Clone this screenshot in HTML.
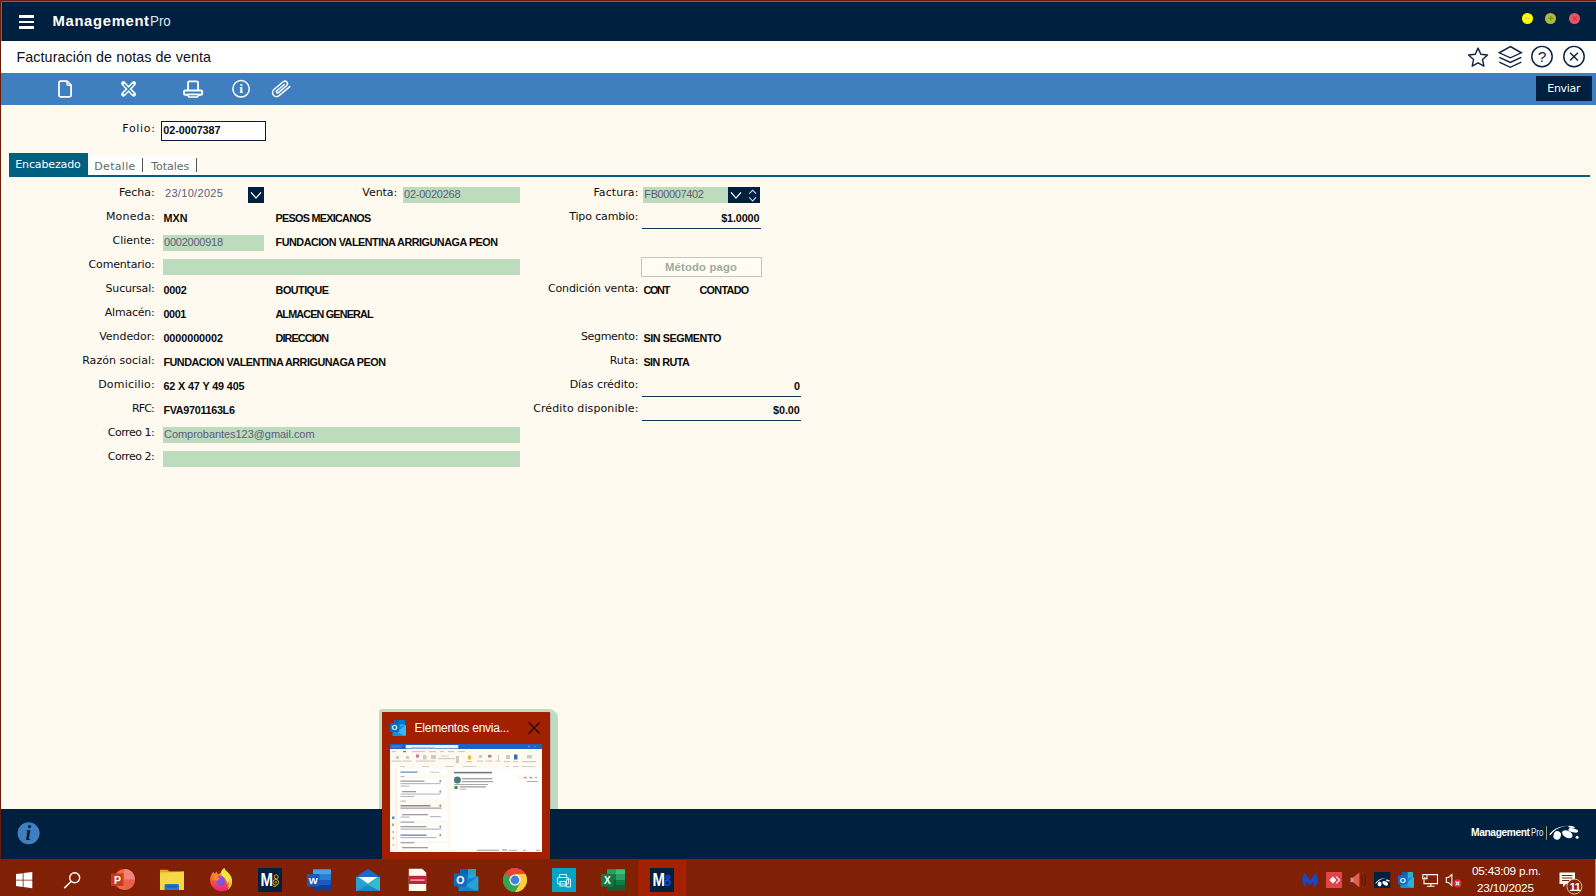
<!DOCTYPE html>
<html lang="es"><head><meta charset="utf-8"><title>Facturación de notas de venta</title>
<style>
html,body{margin:0;padding:0;background:#fffaf0;}
body{width:1596px;height:896px;position:relative;overflow:hidden;font-family:'Liberation Sans',sans-serif;}
.r{position:absolute;}
.t{position:absolute;white-space:pre;}
svg{position:absolute;overflow:visible;}
</style></head><body>
<div class="r" style="left:0px;top:0px;width:1596px;height:896px;background:#fffaf0;"></div>
<div class="r" style="left:0px;top:0px;width:1596px;height:1px;background:#6a1c08;"></div>
<div class="r" style="left:1px;top:1px;width:1595px;height:1px;background:#5a6a9a;"></div>
<div class="r" style="left:1px;top:2px;width:1595px;height:39px;background:#00203f;"></div>
<div class="r" style="left:1px;top:1px;width:1px;height:40px;background:#5a6a9a;"></div>
<div class="r" style="left:1px;top:41px;width:1595px;height:32px;background:#fff;"></div>
<div class="r" style="left:1px;top:73px;width:1595px;height:32px;background:#3f7fbf;"></div>
<div class="r" style="left:0px;top:0px;width:1px;height:859px;background:#6a1c08;"></div>
<div class="r" style="left:18.8px;top:15.1px;width:15.3px;height:2.9px;background:#fff;border-radius:.5px;"></div>
<div class="r" style="left:18.8px;top:20.5px;width:15.3px;height:2.9px;background:#fff;border-radius:.5px;"></div>
<div class="r" style="left:18.8px;top:25.9px;width:15.3px;height:2.9px;background:#fff;border-radius:.5px;"></div>
<div class="r" style="left:1522.0px;top:12.799999999999999px;width:11.2px;height:11.2px;border-radius:50%;background:#ffff00;"></div>
<div class="r" style="left:1545.2px;top:12.799999999999999px;width:11.2px;height:11.2px;border-radius:50%;background:#b4b840;"></div>
<div class="r" style="left:1569.3000000000002px;top:12.799999999999999px;width:11.2px;height:11.2px;border-radius:50%;background:#e0586c;"></div>
<div class="r" style="left:1536px;top:76px;width:56px;height:25px;background:#00203f;"></div>
<div class="r" style="left:161px;top:121px;width:105px;height:20px;background:#fff;box-sizing:border-box;border:1px solid #0a1a3a;"></div>
<div class="r" style="left:9px;top:175px;width:1581px;height:2px;background:#006080;"></div>
<div class="r" style="left:9px;top:153px;width:79px;height:24px;background:#006080;"></div>
<div class="r" style="left:88px;top:156px;width:109px;height:19px;background:#fff;"></div>
<div class="r" style="left:142px;top:158px;width:1px;height:14px;background:#555;"></div>
<div class="r" style="left:196px;top:158px;width:1px;height:14px;background:#555;"></div>
<div class="r" style="left:403px;top:187px;width:117px;height:16px;background:#bddbbd;"></div>
<div class="r" style="left:163px;top:235px;width:101px;height:16px;background:#bddbbd;"></div>
<div class="r" style="left:163px;top:259px;width:357px;height:16px;background:#bddbbd;"></div>
<div class="r" style="left:163px;top:427px;width:357px;height:16px;background:#bddbbd;"></div>
<div class="r" style="left:163px;top:451px;width:357px;height:16px;background:#bddbbd;"></div>
<div class="r" style="left:643px;top:187px;width:85px;height:16px;background:#bddbbd;"></div>
<div class="r" style="left:728px;top:187px;width:32px;height:16px;background:#00203f;"></div>
<div class="r" style="left:248px;top:187px;width:16px;height:16px;background:#00203f;"></div>
<div class="r" style="left:642px;top:228px;width:119px;height:1px;background:#1a3050;"></div>
<div class="r" style="left:642px;top:396px;width:159px;height:1px;background:#1a3050;"></div>
<div class="r" style="left:642px;top:420px;width:159px;height:1px;background:#1a3050;"></div>
<div class="r" style="left:641px;top:257px;width:121px;height:20px;background:#fffcf4;box-sizing:border-box;border:1px solid #c4c4c4;"></div>
<div class="r" style="left:1px;top:809px;width:1595px;height:50px;background:#00203f;"></div>
<div class="r" style="left:0px;top:859px;width:1596px;height:37px;background:#802004;"></div>
<!-- window control glyphs -->
<svg style="left:0;top:0" width="1596" height="110" viewBox="0 0 1596 110">
  <g fill="none" stroke-linecap="butt">
    <path d="M1525.1 18.4h5" stroke="#d6c45a" stroke-width="1.1"/>
    <path d="M1548.1 18.4h5.4M1550.8 15.7v5.4" stroke="#58a018" stroke-width="1.1"/>
    <path d="M1572.9 16.4l4 4M1576.9 16.4l-4 4" stroke="#ee2a2a" stroke-width="1.1"/>
  </g>
  <!-- title bar icons -->
  <g fill="none" stroke="#0c2340" stroke-width="1.45" stroke-linejoin="miter">
    <path d="M1478.05 48.10L1480.81 54.30L1487.56 55.01L1482.52 59.55L1483.93 66.19L1478.05 62.80L1472.17 66.19L1473.58 59.55L1468.54 55.01L1475.29 54.30Z" stroke-linejoin="round" stroke-width="1.4"/>
    <path d="M1510.3 46.5l11 6.3-11 5-11-5z"/>
    <path d="M1499.3 57.3l11 5.1 11-5.1M1499.3 62.2l11 5.1 11-5.1"/>
    <circle cx="1542" cy="56.6" r="10.2"/>
    <circle cx="1574" cy="56.6" r="10.2"/>
    <path d="M1570.1 52.7l7.8 7.8M1577.9 52.7l-7.8 7.8"/>
      </g>
  <text x="1542.100" y="62.300" text-anchor="middle" font-family="'Liberation Sans',sans-serif" font-size="15.500" fill="#0c2340">?</text>
  <!-- toolbar icons -->
  <g fill="none" stroke="#fff" stroke-linejoin="round" stroke-linecap="round">
    <path d="M60.600 81.100h6.400l4.100 4.100v10c0 .9-.7 1.600-1.600 1.600h-8.900c-.9 0-1.600-.7-1.600-1.600v-12.500c0-.9.700-1.600 1.600-1.600z" stroke-width="1.75"/>
    <path d="M66.900 81.400v2.800c0 .6.500 1.100 1.100 1.100h2.900" stroke-width="1.300"/>
    <path d="M123.400 83.500l10.400 10.900M133.800 83.500l-10.400 10.900" stroke-width="4.5"/>
    <path d="M124.300 84.500l8.600 8.900M132.900 84.500l-8.600 8.900" stroke="#2a8ab0" stroke-width="1.5"/>
    <!-- printer -->
    <path d="M188.100 90v-7.500c0-.7.500-1.200 1.200-1.200h7.600c.7 0 1.200.5 1.200 1.200v7.500" stroke-width="1.800"/>
    <path d="M185.300 90.500h15.600c.7 0 1.300.6 1.300 1.300v1.700c0 .7-.6 1.300-1.300 1.300h-15.600c-.7 0-1.300-.6-1.300-1.300v-1.700c0-.7.600-1.300 1.300-1.300z" stroke-width="1.900"/>
    <path d="M187.200 94.600l1.600 2.400h8.600l1.600-2.400z" stroke-width="1.500" fill="#3f7fbf"/>
    <!-- info -->
    <circle cx="241.050" cy="88.800" r="8.200" stroke-width="1.500"/>
    <!-- paperclip -->
    <g transform="translate(280.900 88.900) rotate(-40)" stroke-width="1.500">
      <path d="M8.300 4H-5.700A4 4 0 0 1 -5.700 -4H6.300A2.600 2.600 0 0 1 6.300 1.200H-4.300A1.100 1.100 0 0 1 -4.300 -1.200H5.400"/>
    </g>
  </g>
  <text x="241.100" y="93.200" text-anchor="middle" font-family="'Liberation Serif',serif" font-weight="bold" font-size="13.500" fill="#fffdf0">i</text>
</svg>
<!-- form chevrons -->
<svg style="left:0;top:180px" width="800" height="30" viewBox="0 180 800 30">
  <g fill="none" stroke="#fff" stroke-width="1.35" stroke-linecap="butt" stroke-linejoin="miter">
    <path d="M251 192.400l5 5.700 5-5.700"/>
    <path d="M731 192.400l5 5.700 5-5.700"/>
    <path d="M749.300 193.700l3.350-3.500 3.350 3.500M749.300 197.300l3.350 3.700 3.350-3.700" stroke-width="1.050" stroke="#e4e0f0"/>
  </g>
</svg>
<!-- footer info + logo -->
<svg style="left:0;top:809px" width="1596" height="50" viewBox="0 809 1596 50">
  <circle cx="28.600" cy="833.300" r="11" fill="#3f7fbf"/>
  <text x="28.300" y="840.200" text-anchor="middle" font-family="'Liberation Serif',serif" font-style="italic" font-weight="bold" font-size="20" fill="#00203f">i</text>
  <rect x="1546" y="826.200" width="1" height="13.600" fill="#9aa07a"/>
  <g fill="#fff">
    <path d="M1549.300 834.600c3.500-5.600 11-9.300 19.500-8.900c-7.500.5-13.600 3.300-17.400 8.300c-.8 1-1.700 1.400-2.100.6z"/>
    <ellipse cx="1557.200" cy="835.400" rx="3.700" ry="4.300" transform="rotate(15 1557.200 835.400)"/>
    <ellipse cx="1567.300" cy="834.200" rx="5.600" ry="3.500" transform="rotate(28 1567.300 834.200)"/>
    <ellipse cx="1573.300" cy="830.400" rx="5" ry="1.900" transform="rotate(14 1573.300 830.400)"/>
    <ellipse cx="1571.500" cy="826.900" rx="3.400" ry="1" transform="rotate(12 1571.500 826.900)"/>
    <circle cx="1577.100" cy="837.300" r="1.500"/>
  </g>
</svg>
<!-- taskbar preview popup -->
<div class="r" style="left:379px;top:709px;width:178.500px;height:100px;background:#c0dcc0;border-radius:3px 9px 0 0;"></div>
<div class="r" style="left:382px;top:712px;width:168px;height:147px;background:#a02000;"></div>
<div class="r" style="left:550px;top:713px;width:1px;height:96px;background:#b4b4b4;"></div>
<svg style="left:382px;top:712px" width="168" height="147" viewBox="382 712 168 147">
  <!-- outlook icon -->
  <g>
    <rect x="394.500" y="720" width="10.500" height="9" fill="#28a8ea"/>
    <rect x="394.500" y="720" width="5.250" height="4.500" fill="#0364b8"/><rect x="399.750" y="720" width="5.250" height="4.500" fill="#0078d4"/>
    <rect x="394.500" y="724.500" width="5.250" height="4.500" fill="#0f78d4"/><rect x="399.750" y="724.500" width="5.250" height="4.500" fill="#28a8ea"/>
    <path d="M392.500 728.500l13.500-3.500v9.500c0 .8-.6 1.500-1.500 1.500h-12z" fill="#1490df"/>
    <path d="M406 725l-9 7 7.500 4c.9 0 1.500-.7 1.500-1.500z" fill="#50d9ff" opacity=".55"/>
    <rect x="390" y="723" width="9" height="9" rx=".8" fill="#0f6cbd"/>
    <text x="394.500" y="730.200" text-anchor="middle" font-family="'Liberation Sans',sans-serif" font-weight="bold" font-size="7.500" fill="#fff">O</text>
  </g>
  <path d="M528.600 722.300l11 11.300M539.600 722.300l-11 11.300" stroke="#000" stroke-width="1.050" fill="none"/>
  <!-- thumbnail -->
  <rect x="390" y="744" width="152" height="108" fill="#fff"/>
  <rect x="390" y="744" width="152" height="5" fill="#2060c4"/>
  <rect x="405.700" y="745" width="52.600" height="3.400" fill="#e8f0fc"/>
  <rect x="411" y="747" width="24" height="1.400" fill="#a8c8f0"/>
  <rect x="390" y="749" width="152" height="19.500" fill="#fffaf0"/>
  <rect x="390" y="768.500" width="6" height="83.500" fill="#fffaf0"/>
  <rect x="396" y="768.500" width="1" height="83.500" fill="#f4efe2"/>
  <rect x="447" y="768.500" width="3.500" height="83.500" fill="#fffaf0"/>
  <rect x="390" y="849" width="152" height="3" fill="#fffaf0"/>
  <g fill="#fffaf0">
    <rect x="397" y="775" width="49.500" height="3"/><rect x="397" y="799" width="49.500" height="12.500"/><rect x="397" y="820.500" width="49.500" height="3"/><rect x="397" y="841" width="49.500" height="3"/>
  </g>
  <!-- ribbon marks -->
  <g fill="#ccccc6">
    <rect x="392" y="751" width="4" height="1.200"/><rect x="403" y="751" width="3" height="1.200" fill="#5080c0"/><rect x="412" y="751" width="13" height="1.200"/><rect x="429" y="751" width="7" height="1.200"/><rect x="440" y="751" width="4" height="1.200"/><rect x="448" y="751" width="6" height="1.200"/><rect x="458" y="751" width="7" height="1.200"/>
    <rect x="391.500" y="760.500" width="10" height="1.200"/><rect x="402.500" y="760.500" width="9" height="1.200"/><rect x="416" y="760.500" width="19" height="1.200"/><rect x="438" y="758" width="17" height="1.200"/><rect x="441" y="755.500" width="8" height="1"/><rect x="466" y="761" width="6" height="1.200"/><rect x="477" y="760.500" width="6" height="1.200"/><rect x="485.500" y="760.500" width="7" height="1.200"/><rect x="495.500" y="760.500" width="5" height="1.200"/><rect x="504" y="761" width="6" height="1.200"/><rect x="513" y="761" width="5" height="1.200"/><rect x="522" y="761" width="14" height="1.200"/>
    <rect x="396" y="756" width="3" height="3"/><rect x="406" y="756" width="3" height="3"/><rect x="423" y="755" width="3.500" height="4.500"/><rect x="431" y="755" width="5" height="4"/><rect x="456" y="756" width="3" height="7"/><rect x="479" y="755" width="3" height="3"/><rect x="498" y="755" width="1" height="5"/><rect x="506" y="755" width="4" height="4"/><rect x="527" y="755" width="5" height="3.500"/>
    <rect x="416" y="754.500" width="3" height="3" fill="#d070a0"/><rect x="468" y="755.500" width="3" height="4" fill="#e8b830"/><rect x="488" y="755" width="3.500" height="2.500" fill="#d868b0"/><rect x="514" y="754.500" width="3.500" height="5" fill="#3070c0"/>
    <rect x="400" y="766" width="5" height="1" fill="#d0d0c8"/><rect x="422" y="766" width="7" height="1" fill="#d0d0c8"/><rect x="445" y="766" width="9" height="1" fill="#d0d0c8"/><rect x="463" y="766" width="13" height="1" fill="#d0d0c8"/><rect x="506" y="766" width="3" height="1" fill="#d0d0c8"/><rect x="513" y="766" width="6" height="1" fill="#d0d0c8"/><rect x="522" y="766" width="13" height="1" fill="#d0d0c8"/>
  </g>
  <!-- list -->
  <g fill="#bcbcc0">
    <rect x="400.500" y="771.500" width="17" height="1.300" fill="#6a90d0"/><rect x="430.500" y="771.800" width="9" height="1" fill="#c8c8c8"/>
    <rect x="400.500" y="776" width="4" height="1.200"/>
    <rect x="400.500" y="780.500" width="24" height="1.300" fill="#9c9ca4"/><rect x="400.500" y="783" width="40" height="1.200"/><rect x="400.500" y="785.500" width="9" height="1.100" fill="#b8b8b8"/><rect x="439.500" y="780" width="1.600" height="2.200" fill="#909090"/>
    <rect x="402" y="791" width="14" height="1.300" fill="#9c9ca4"/><rect x="400.500" y="793.500" width="40" height="1.200"/><rect x="400.500" y="796" width="14" height="1.100" fill="#b8b8b8"/><rect x="439.500" y="790.500" width="1.600" height="2.200" fill="#909090"/>
    <rect x="400.500" y="800.500" width="5.500" height="1.200"/>
    <rect x="400.500" y="805" width="30" height="1.500" fill="#8a8a94"/><rect x="400.500" y="807.500" width="41" height="1.300" fill="#a4a4aa"/><rect x="439.500" y="804.500" width="1.600" height="2.500" fill="#909090"/>
    <rect x="402" y="814" width="26" height="1.300" fill="#9c9ca4"/><rect x="400.500" y="816.500" width="9" height="1.200"/><rect x="430" y="816" width="11" height="1.200"/>
    <rect x="400.500" y="821.500" width="14" height="1.300" fill="#a8a8ae"/>
    <rect x="400.500" y="826" width="26" height="1.300" fill="#9c9ca4"/><rect x="400.500" y="828.500" width="41" height="1.300"/><rect x="439.500" y="825.500" width="1.600" height="2.200" fill="#909090"/>
    <rect x="400.500" y="834.500" width="26" height="1.300" fill="#7080b0"/><rect x="400.500" y="837" width="36" height="1.200"/><rect x="439.500" y="834" width="1.600" height="2.200" fill="#909090"/>
    <rect x="400.500" y="842" width="14" height="1.300" fill="#a8a8ae"/>
    <rect x="402" y="847" width="26" height="1.300" fill="#9c9ca4"/>
    <rect x="392" y="816.500" width="2.500" height="2.500" fill="#5088d0"/><rect x="392" y="823.500" width="2" height="2.500" fill="#a0b0a8"/><rect x="392.500" y="831" width="1.500" height="2" fill="#b0b8b0"/><rect x="392.500" y="837" width="1.500" height="2.500" fill="#a8c0b0"/><rect x="392.500" y="844.500" width="2" height="1" fill="#b0b0b0"/>
  </g>
  <!-- reading pane -->
  <g>
    <rect x="454" y="771.800" width="38" height="1.600" fill="#787880"/>
    <circle cx="457.400" cy="780" r="3.500" fill="#4f7a78"/>
    <rect x="462" y="778" width="30" height="1.400" fill="#a4a4aa"/><rect x="462" y="781" width="31" height="1.200" fill="#a0a0a8"/>
    <rect x="454" y="784" width="34" height=".9" fill="#a0a0a0"/>
    <circle cx="456" cy="787.500" r="1.800" fill="#2f9a3a"/>
    <rect x="460" y="786.200" width="26" height="1.300" fill="#a0a0a0"/><rect x="460" y="788.600" width="6" height="1.100" fill="#b8b8b8"/>
    <rect x="518" y="775.500" width="20.500" height="4" fill="#fdf8ee"/>
    <rect x="524" y="777" width="2.500" height="1.200" fill="#e060b0"/><rect x="530" y="777" width="2" height="1.200" fill="#5090e0"/><rect x="535" y="777" width="2" height="1.200" fill="#b0b0b0"/>
    <rect x="527" y="781" width="11" height="1.100" fill="#b0b0b4"/>
    <rect x="477" y="849.700" width="22" height="1.100" fill="#a8a8a8"/><rect x="502" y="849" width="5" height="2" fill="#c8c8c0"/><rect x="509" y="849.800" width="8" height="1" fill="#b0b0b0"/><rect x="523" y="849.800" width="3" height="1" fill="#b0b0b0"/><rect x="536" y="849.500" width="4" height="1.500" fill="#ccccc6"/>
    <rect x="528" y="745.800" width="2" height="1.500" fill="#6090e0"/><rect x="534" y="746.200" width="2" height="1" fill="#6090e0"/><rect x="391.500" y="745.500" width="10" height="2" fill="#4880dc"/>
  </g>
</svg>
<!-- taskbar -->
<div class="r" style="left:638px;top:860px;width:48px;height:36px;background:#a42100;"></div>
<div class="r" style="left:1595px;top:859px;width:1px;height:37px;background:#a89088;"></div>
<svg style="left:0;top:859px" width="1596" height="37" viewBox="0 859 1596 37">
  <!-- start -->
  <g fill="#fff">
    <path d="M16 874.100l6.700-.9v6.500h-6.700zM23.500 873.100l8.800-1.200v7.800h-8.800zM16 880.500h6.700v6.500l-6.700-.9zM23.500 880.500h8.800v7.800l-8.800-1.200z"/>
  </g>
  <!-- search -->
  <circle cx="74.700" cy="877.700" r="5" fill="none" stroke="#fff" stroke-width="1.400"/>
  <path d="M71.300 881.300l-7 6.800" stroke="#fff" stroke-width="1.500" fill="none"/>
  <!-- powerpoint -->
  <g>
    <circle cx="124.500" cy="879.500" r="10.500" fill="#ed6c47"/>
    <path d="M124.500 869a10.500 10.500 0 0 1 10.500 10.500h-10.500z" fill="#ff8f6b" opacity=".9"/>
    <path d="M124.500 869a10.500 10.500 0 0 1 10.500 10.500h-10.500z" fill="#e8868a" opacity=".7"/>
    <path d="M135 879.500a10.500 10.500 0 0 1-10.500 10.500v-10.500z" fill="#e8614a"/>
    <rect x="111" y="873.500" width="12.500" height="12.500" rx=".8" fill="#c43e1c"/>
    <text x="117.400" y="883.700" text-anchor="middle" font-family="'Liberation Sans',sans-serif" font-weight="bold" font-size="10.500" fill="#fff">P</text>
  </g>
  <!-- folder -->
  <g>
    <path d="M160 869.800h7.500l2 2h-9.500z" fill="#e8a820"/>
    <rect x="160" y="871.500" width="24" height="18.500" fill="#f0c838"/>
    <path d="M160 890v-16l24-2.500v18.500z" fill="#f4d848"/>
    <path d="M164.500 890v-4.500c0-1 .6-1.500 1.500-1.500h11.500c.9 0 1.500.5 1.500 1.500v4.500z" fill="#2878d0"/>
    <rect x="166.500" y="885.500" width="10.500" height="2" fill="#1a5cb0"/>
  </g>
  <!-- firefox -->
  <defs>
    <linearGradient id="ffb" x1="0" y1="0" x2="0" y2="1"><stop offset="0" stop-color="#ff9a28"/><stop offset=".55" stop-color="#f0503c"/><stop offset="1" stop-color="#e61e8c"/></linearGradient>
    <linearGradient id="ffg" x1="0" y1="0" x2="1" y2="1"><stop offset="0" stop-color="#c048d8"/><stop offset="1" stop-color="#5a56e0"/></linearGradient>
  </defs>
  <g>
    <path d="M211.500 874.500c.8-1.500 1.600-2.300 2.300-2.800c0 1 .4 1.600.9 2.100c.6-1.100 1.400-1.900 2.300-2.300c-.2 1.200.1 2 .9 2.700c2-1.300 5-1.600 7.500-.6c4.500 1.900 6.800 6.500 5.800 11c-1.200 4.800-6 7.500-11.200 6.600c-5.600-1-9.500-5.500-9.900-10.300c-.2-2.400.3-4.600 1.400-6.400z" fill="url(#ffb)"/>
    <path d="M224.300 867.700c.4 1.700 1.600 2.900 3.200 4.300c2.900 2.500 4.900 5.700 4.600 9.900c-.3 3.600-2 6.300-4.600 8c2-2.800 2.300-5.600 1.300-8.300c-.3 1.300-.9 2.100-1.800 2.600c.3-3.400-1.500-5.600-3.500-7.100c-1.800-1.300-2.900-2.800-2.600-5.200c.8-1.300 1.900-2.900 3.400-4.200z" fill="#f2e63c"/>
    <path d="M229 879c.5 3.500-.5 6.500-3 8.800c3-.8 5.200-3.500 5.800-6.500z" fill="#f8b838" opacity=".8"/>
    <ellipse cx="220.300" cy="880.700" rx="4.600" ry="5" fill="url(#ffg)"/>
    <path d="M213.500 876.800c1.200-1.200 3.300-1.800 5.300-1.200c-1.100.3-1.800 1-1.900 1.900c1.300-.1 2.500.2 3.100 1.200c-1.700.5-2.600 1.900-4.300 1.900c-1.500 0-2.500-1.700-2.200-3.800z" fill="#ff8a20"/>
  </g>
  <!-- MB navy icons -->
  <g>
    <rect x="258" y="868" width="24" height="24" fill="#00203f"/>
    <text x="260.600" y="885.900" font-family="'Liberation Sans',sans-serif" font-weight="bold" font-size="18" fill="#fff" textLength="12.500" lengthAdjust="spacingAndGlyphs">M</text>
    <g fill="none" stroke="#e0a818" stroke-width="1"><circle cx="276.200" cy="876.800" r="2"/><circle cx="275.800" cy="882.300" r="2.900"/><circle cx="275.800" cy="882.300" r="1" stroke-width=".8"/><path d="M272.800 886c1.300.7 2.600.6 3.800-.1"/></g>
    <rect x="650" y="868" width="24" height="24" fill="#00203f"/>
    <text x="652.600" y="885.900" font-family="'Liberation Sans',sans-serif" font-weight="bold" font-size="18" fill="#fff" textLength="12.500" lengthAdjust="spacingAndGlyphs">M</text>
    <g fill="none" stroke="#0a50e0" stroke-width="1.600"><circle cx="667.800" cy="877.200" r="1.700"/><circle cx="667.400" cy="882.700" r="2.500"/></g>
  </g>
  <!-- word -->
  <g>
    <rect x="313" y="869.300" width="18" height="5.400" fill="#41a5ee"/><rect x="313" y="874.700" width="18" height="5.300" fill="#2b7cd3"/><rect x="313" y="880" width="18" height="5.300" fill="#185abd"/><rect x="313" y="885.300" width="18" height="5.200" fill="#103f91"/>
    <rect x="307" y="874" width="12.500" height="12.500" rx=".8" fill="#185abd"/>
    <text x="313.250" y="883.700" text-anchor="middle" font-family="'Liberation Sans',sans-serif" font-weight="bold" font-size="9.500" fill="#fff">W</text>
  </g>
  <!-- mail -->
  <g>
    <path d="M356 877l12-8.300 12 8.300z" fill="#1a6ac8"/>
    <rect x="356" y="877" width="24" height="14" fill="#30b0d8"/>
    <path d="M358.500 877h19l-9.500 6.500z" fill="#fffaf0"/>
    <path d="M356 877l12 8 12-8v14h-24z" fill="#28a0d0"/>
    <path d="M368 885l12-8v14z" fill="#38c8d0" opacity=".7"/>
    <path d="M356 891l12-6 12 6z" fill="#1888c0"/>
  </g>
  <!-- pdf -->
  <g>
    <path d="M408.800 868.700h13.400l4 4v18.300h-17.400z" fill="#fffaf0"/>
    <rect x="408.800" y="875.800" width="17.400" height="8.200" fill="#c8203c"/>
    <rect x="410.300" y="879.300" width="14.400" height="1.600" fill="#f0a0b0"/>
  </g>
  <!-- outlook -->
  <g>
    <rect x="460.500" y="869" width="15.500" height="13" fill="#28a8ea"/>
    <rect x="460.500" y="869" width="7.800" height="6.500" fill="#0364b8"/><rect x="468.300" y="869" width="7.700" height="6.500" fill="#2aa0c8"/>
    <rect x="460.500" y="875.500" width="7.800" height="6.500" fill="#0f78d4"/><rect x="468.300" y="875.500" width="7.700" height="6.500" fill="#28a8ea"/>
    <path d="M458.500 881.500l19.800-5.500v13.500c0 .9-.7 1.600-1.600 1.600h-18.200z" fill="#1580cc"/>
    <path d="M478.300 876l-13 10 11.400 5.100c.9 0 1.600-.7 1.600-1.600z" fill="#35b8d8" opacity=".6"/>
    <rect x="453.800" y="873.500" width="13" height="13" rx="1" fill="#0f6cbd"/>
    <text x="460.300" y="883.800" text-anchor="middle" font-family="'Liberation Sans',sans-serif" font-weight="bold" font-size="10.500" fill="#fff">O</text>
  </g>
  <!-- chrome -->
  <g>
    <circle cx="515" cy="880" r="12" fill="#e8453c"/>
    <path d="M515 880l-10.400 6a12 12 0 0 0 10.400 6l5.200-9z" fill="#2da94f"/>
    <path d="M504.600 874a12 12 0 0 0 0 12l10.400-6z" fill="#2da94f"/>
    <path d="M515 880l5.200 3-5.200 9a12 12 0 0 0 10.400-18h-10.400z" fill="#fdd037"/>
    <path d="M504.600 874a12 12 0 0 1 20.800 0h-10.400z" fill="#e8453c"/>
    <circle cx="515" cy="880" r="5.600" fill="#fff"/>
    <circle cx="515" cy="880" r="4.400" fill="#3f80e0"/>
  </g>
  <!-- teal app -->
  <g>
    <rect x="552" y="868" width="24" height="24" fill="#00a4c4"/>
    <g fill="none" stroke="#d8f0f8" stroke-width="1.100">
      <rect x="559.500" y="874.500" width="7" height="3" rx=".8"/><rect x="557.500" y="877.500" width="11" height="6.500" rx="1.200"/><rect x="560" y="881.500" width="6" height="4.500"/><rect x="566.500" y="879" width="4" height="8" rx=".8"/>
    </g>
  </g>
  <!-- excel -->
  <g>
    <rect x="607" y="869.300" width="9" height="5.400" fill="#21a366"/><rect x="616" y="869.300" width="9" height="5.400" fill="#33c481"/>
    <rect x="607" y="874.700" width="9" height="5.300" fill="#107c41"/><rect x="616" y="874.700" width="9" height="5.300" fill="#21a366"/>
    <rect x="607" y="880" width="18" height="5.300" fill="#185c37"/><rect x="616" y="880" width="9" height="5.300" fill="#107c41"/>
    <rect x="607" y="885.300" width="18" height="5.200" fill="#185c37"/>
    <rect x="601" y="874" width="12.500" height="12.500" rx=".8" fill="#107c41"/>
    <text x="607.250" y="883.800" text-anchor="middle" font-family="'Liberation Sans',sans-serif" font-weight="bold" font-size="10" fill="#fff">X</text>
  </g>
</svg>
<!-- tray -->
<svg style="left:1290px;top:859px" width="306" height="37" viewBox="1290 859 306 37">
  <!-- malwarebytes -->
  <path d="M1304.800 873L1310 880.600L1315.200 873C1317.500 875.500 1318.300 879 1317.500 882C1316.800 884.500 1315.300 886.400 1313.300 887.300C1314.200 885.300 1314.300 883.400 1313.600 881.500L1310 885.500L1306.400 881.500C1305.700 883.400 1305.800 885.300 1306.700 887.300C1304.700 886.400 1303.200 884.500 1302.500 882C1301.700 879 1302.500 875.500 1304.800 873Z" fill="#1848c8"/>
  <!-- anydesk -->
  <rect x="1326" y="872" width="16" height="16" fill="#e24248"/>
  <path d="M1329.300 880l3.500-3.500 3.500 3.500-3.500 3.500z" fill="#fff"/>
  <path d="M1335.300 876.500h1.500l3.500 3.500-3.500 3.500h-1.500l3.500-3.500z" fill="#fff"/>
  <!-- speaker pink -->
  <path d="M1350.200 877.300h3l6.200-5v15.200l-6.200-5h-3z" fill="#e08c98" stroke="#5a1206" stroke-width=".5"/>
  <path d="M1353.500 877.300l5.900-4.700v14.700l-5.900-4.700z" fill="#d85c40" opacity=".85"/>
  <g fill="none" stroke="#5e1206" stroke-width=".9"><path d="M1361.300 876c1.500 2.400 1.500 5.600 0 8"/><path d="M1363.600 874c2.600 3.600 2.600 8.400 0 12"/></g>
  <!-- MP tray -->
  <rect x="1374" y="872" width="16.200" height="16" fill="#00203f"/>
  <g fill="#fff">
    <path d="M1375.300 883.300c2-3.300 6-5.300 10.800-5c-4.200.4-7.600 2-9.600 4.700c-.5.600-1 .8-1.200.3z"/>
    <ellipse cx="1379.600" cy="884" rx="2" ry="2.400" transform="rotate(15 1379.600 884)"/>
    <ellipse cx="1385.200" cy="883.300" rx="3.100" ry="1.900" transform="rotate(28 1385.200 883.300)"/>
    <ellipse cx="1387.800" cy="880.500" rx="2" ry=".9" transform="rotate(14 1387.800 880.500)"/>
  </g>
  <!-- outlook small -->
  <g>
    <rect x="1402.500" y="872" width="10.500" height="9" fill="#28a8ea"/>
    <rect x="1402.500" y="872" width="5.250" height="4.500" fill="#0364b8"/><rect x="1407.750" y="872" width="5.250" height="4.500" fill="#30b0b8"/>
    <path d="M1400.500 880.500l13.500-3.500v9.500c0 .8-.6 1.500-1.500 1.500h-12z" fill="#1490df"/>
    <path d="M1414 877l-9 7 7.500 4c.9 0 1.500-.7 1.500-1.500z" fill="#40c8d0" opacity=".6"/>
    <rect x="1398" y="875" width="9.500" height="9.500" rx=".8" fill="#0f6cbd"/>
    <text x="1402.750" y="882.500" text-anchor="middle" font-family="'Liberation Sans',sans-serif" font-weight="bold" font-size="7.800" fill="#fff">O</text>
  </g>
  <!-- network -->
  <g fill="none" stroke="#fff" stroke-width="1.100">
    <path d="M1427.500 874.600h10v9h-13.500v-4"/>
    <rect x="1422.800" y="874.600" width="4.200" height="4.200"/>
    <path d="M1424.900 877v1.800M1430.800 883.600v2.600M1427 886.300h7.600"/>
  </g>
  <!-- volume muted -->
  <path d="M1446.300 877.500h2.200l3.400-3v11l-3.400-3h-2.200z" fill="none" stroke="#fff" stroke-width="1.050"/>
  <circle cx="1457.500" cy="883.400" r="4.100" fill="#e02438"/>
  <path d="M1455.600 881.500l3.800 3.800M1459.400 881.500l-3.800 3.800" stroke="#fff" stroke-width="1.100" fill="none"/>
  <!-- notifications -->
  <path d="M1559.500 872.500h15.500v11.500h-9l-3 3v-3h-3.500z" fill="#fff"/>
  <g stroke="#802004" stroke-width="1"><path d="M1562 875.500h10.500M1562 878h10.500M1562 880.500h7"/></g>
  <circle cx="1574.400" cy="886.600" r="7.500" fill="#8a2408" stroke="#f0c8b8" stroke-width=".9"/>
  <text x="1574.800" y="890.900" text-anchor="middle" font-family="'Liberation Sans',sans-serif" font-weight="bold" font-size="11.500" fill="#fff" letter-spacing="-.9">11</text>
</svg>

<span class="t" style="left:52.50px;top:12.47px;font:normal bold 14.8px/19px 'Liberation Sans',sans-serif;letter-spacing:0.676px;color:#fff">Management</span>
<span class="t" style="left:149.70px;top:12.47px;font:normal normal 14.8px/19px 'Liberation Sans',sans-serif;letter-spacing:0.000px;color:#dfe6ee;transform:scaleX(0.9038);transform-origin:0 0">Pro</span>
<span class="t" style="left:16.50px;top:48.15px;font:normal normal 14.3px/18px 'Liberation Sans',sans-serif;letter-spacing:0.075px;color:#0a1220">Facturación de notas de venta</span>
<span class="t" style="left:1547.30px;top:80.59px;font:normal normal 11px/15px 'DejaVu Sans','Liberation Sans',sans-serif;letter-spacing:-0.306px;color:#fff">Enviar</span>
<span class="t" style="left:122.30px;top:120.89px;font:normal normal 11px/15px 'DejaVu Sans','Liberation Sans',sans-serif;letter-spacing:0.679px;color:#0e0e10">Folio:</span>
<span class="t" style="left:163.30px;top:123.26px;font:normal bold 10.8px/14px 'Liberation Sans',sans-serif;letter-spacing:-0.048px;color:#0a0a0a">02-0007387</span>
<span class="t" style="left:15.30px;top:156.59px;font:normal normal 11px/15px 'DejaVu Sans','Liberation Sans',sans-serif;letter-spacing:-0.140px;color:#fff">Encabezado</span>
<span class="t" style="left:94.30px;top:159.09px;font:normal normal 11px/15px 'DejaVu Sans','Liberation Sans',sans-serif;letter-spacing:0.316px;color:#666">Detalle</span>
<span class="t" style="left:151.20px;top:159.09px;font:normal normal 11px/15px 'DejaVu Sans','Liberation Sans',sans-serif;letter-spacing:-0.026px;color:#666">Totales</span>
<span class="t" style="left:118.90px;top:184.69px;font:normal normal 11px/15px 'DejaVu Sans','Liberation Sans',sans-serif;letter-spacing:-0.031px;color:#0e0e10">Fecha:</span>
<span class="t" style="left:105.90px;top:208.69px;font:normal normal 11px/15px 'DejaVu Sans','Liberation Sans',sans-serif;letter-spacing:0.236px;color:#0e0e10">Moneda:</span>
<span class="t" style="left:112.60px;top:232.69px;font:normal normal 11px/15px 'DejaVu Sans','Liberation Sans',sans-serif;letter-spacing:-0.030px;color:#0e0e10">Cliente:</span>
<span class="t" style="left:88.60px;top:256.69px;font:normal normal 11px/15px 'DejaVu Sans','Liberation Sans',sans-serif;letter-spacing:-0.183px;color:#0e0e10">Comentario:</span>
<span class="t" style="left:105.60px;top:280.69px;font:normal normal 11px/15px 'DejaVu Sans','Liberation Sans',sans-serif;letter-spacing:-0.203px;color:#0e0e10">Sucursal:</span>
<span class="t" style="left:104.80px;top:304.69px;font:normal normal 11px/15px 'DejaVu Sans','Liberation Sans',sans-serif;letter-spacing:-0.232px;color:#0e0e10">Almacén:</span>
<span class="t" style="left:99.20px;top:328.69px;font:normal normal 11px/15px 'DejaVu Sans','Liberation Sans',sans-serif;letter-spacing:-0.050px;color:#0e0e10">Vendedor:</span>
<span class="t" style="left:82.20px;top:352.69px;font:normal normal 11px/15px 'DejaVu Sans','Liberation Sans',sans-serif;letter-spacing:0.027px;color:#0e0e10">Razón social:</span>
<span class="t" style="left:98.20px;top:376.69px;font:normal normal 11px/15px 'DejaVu Sans','Liberation Sans',sans-serif;letter-spacing:0.209px;color:#0e0e10">Domicilio:</span>
<span class="t" style="left:132.10px;top:400.69px;font:normal normal 11px/15px 'DejaVu Sans','Liberation Sans',sans-serif;letter-spacing:-0.917px;color:#0e0e10">RFC:</span>
<span class="t" style="left:107.80px;top:424.69px;font:normal normal 11px/15px 'DejaVu Sans','Liberation Sans',sans-serif;letter-spacing:-0.477px;color:#0e0e10">Correo 1:</span>
<span class="t" style="left:107.80px;top:448.69px;font:normal normal 11px/15px 'DejaVu Sans','Liberation Sans',sans-serif;letter-spacing:-0.477px;color:#0e0e10">Correo 2:</span>
<span class="t" style="left:362.30px;top:184.69px;font:normal normal 11px/15px 'DejaVu Sans','Liberation Sans',sans-serif;letter-spacing:-0.053px;color:#0e0e10">Venta:</span>
<span class="t" style="left:593.40px;top:184.69px;font:normal normal 11px/15px 'DejaVu Sans','Liberation Sans',sans-serif;letter-spacing:0.092px;color:#0e0e10">Factura:</span>
<span class="t" style="left:569.20px;top:208.69px;font:normal normal 11px/15px 'DejaVu Sans','Liberation Sans',sans-serif;letter-spacing:-0.129px;color:#0e0e10">Tipo cambio:</span>
<span class="t" style="left:548.00px;top:280.69px;font:normal normal 11px/15px 'DejaVu Sans','Liberation Sans',sans-serif;letter-spacing:-0.155px;color:#0e0e10">Condición venta:</span>
<span class="t" style="left:580.90px;top:328.69px;font:normal normal 11px/15px 'DejaVu Sans','Liberation Sans',sans-serif;letter-spacing:-0.304px;color:#0e0e10">Segmento:</span>
<span class="t" style="left:609.70px;top:352.69px;font:normal normal 11px/15px 'DejaVu Sans','Liberation Sans',sans-serif;letter-spacing:-0.044px;color:#0e0e10">Ruta:</span>
<span class="t" style="left:569.70px;top:376.69px;font:normal normal 11px/15px 'DejaVu Sans','Liberation Sans',sans-serif;letter-spacing:-0.056px;color:#0e0e10">Días crédito:</span>
<span class="t" style="left:533.20px;top:400.69px;font:normal normal 11px/15px 'DejaVu Sans','Liberation Sans',sans-serif;letter-spacing:0.104px;color:#0e0e10">Crédito disponible:</span>
<span class="t" style="left:165.00px;top:186.39px;font:normal normal 11px/14px 'Liberation Sans',sans-serif;letter-spacing:0.318px;color:#5c5c7a">23/10/2025</span>
<span class="t" style="left:404.00px;top:187.09px;font:normal normal 11px/14px 'Liberation Sans',sans-serif;letter-spacing:-0.234px;color:#5c5c7a">02-0020268</span>
<span class="t" style="left:644.30px;top:187.09px;font:normal normal 11px/14px 'Liberation Sans',sans-serif;letter-spacing:-0.387px;color:#5c5c7a">FB00007402</span>
<span class="t" style="left:164.00px;top:235.09px;font:normal normal 11px/14px 'Liberation Sans',sans-serif;letter-spacing:-0.229px;color:#5c5c7a">0002000918</span>
<span class="t" style="left:164.00px;top:426.99px;font:normal normal 11px/14px 'Liberation Sans',sans-serif;letter-spacing:-0.051px;color:#5c5c7a">Comprobantes123@gmail.com</span>
<span class="t" style="left:163.40px;top:211.06px;font:normal bold 10.8px/14px 'Liberation Sans',sans-serif;letter-spacing:0.052px;color:#0a0a0a">MXN</span>
<span class="t" style="left:275.60px;top:211.06px;font:normal bold 10.8px/14px 'Liberation Sans',sans-serif;letter-spacing:-0.721px;color:#0a0a0a">PESOS MEXICANOS</span>
<span class="t" style="left:275.60px;top:235.06px;font:normal bold 10.8px/14px 'Liberation Sans',sans-serif;letter-spacing:-0.472px;color:#0a0a0a">FUNDACION VALENTINA ARRIGUNAGA PEON</span>
<span class="t" style="left:163.40px;top:283.06px;font:normal bold 10.8px/14px 'Liberation Sans',sans-serif;letter-spacing:-0.238px;color:#0a0a0a">0002</span>
<span class="t" style="left:275.60px;top:283.06px;font:normal bold 10.8px/14px 'Liberation Sans',sans-serif;letter-spacing:-0.512px;color:#0a0a0a">BOUTIQUE</span>
<span class="t" style="left:163.40px;top:307.06px;font:normal bold 10.8px/14px 'Liberation Sans',sans-serif;letter-spacing:-0.371px;color:#0a0a0a">0001</span>
<span class="t" style="left:275.40px;top:307.06px;font:normal bold 10.8px/14px 'Liberation Sans',sans-serif;letter-spacing:-0.827px;color:#0a0a0a">ALMACEN GENERAL</span>
<span class="t" style="left:163.40px;top:331.06px;font:normal bold 10.8px/14px 'Liberation Sans',sans-serif;letter-spacing:-0.049px;color:#0a0a0a">0000000002</span>
<span class="t" style="left:275.60px;top:331.06px;font:normal bold 10.8px/14px 'Liberation Sans',sans-serif;letter-spacing:-0.886px;color:#0a0a0a">DIRECCION</span>
<span class="t" style="left:163.40px;top:355.06px;font:normal bold 10.8px/14px 'Liberation Sans',sans-serif;letter-spacing:-0.469px;color:#0a0a0a">FUNDACION VALENTINA ARRIGUNAGA PEON</span>
<span class="t" style="left:163.40px;top:379.06px;font:normal bold 10.8px/14px 'Liberation Sans',sans-serif;letter-spacing:-0.129px;color:#0a0a0a">62 X 47 Y 49 405</span>
<span class="t" style="left:163.40px;top:403.06px;font:normal bold 10.8px/14px 'Liberation Sans',sans-serif;letter-spacing:-0.302px;color:#0a0a0a">FVA9701163L6</span>
<span class="t" style="left:721.20px;top:211.06px;font:normal bold 10.8px/14px 'Liberation Sans',sans-serif;letter-spacing:-0.121px;color:#0a0a0a">$1.0000</span>
<span class="t" style="left:643.40px;top:283.06px;font:normal bold 10.8px/14px 'Liberation Sans',sans-serif;letter-spacing:-1.231px;color:#0a0a0a">CONT</span>
<span class="t" style="left:699.50px;top:283.06px;font:normal bold 10.8px/14px 'Liberation Sans',sans-serif;letter-spacing:-0.680px;color:#0a0a0a">CONTADO</span>
<span class="t" style="left:643.40px;top:331.06px;font:normal bold 10.8px/14px 'Liberation Sans',sans-serif;letter-spacing:-0.427px;color:#0a0a0a">SIN SEGMENTO</span>
<span class="t" style="left:643.40px;top:355.06px;font:normal bold 10.8px/14px 'Liberation Sans',sans-serif;letter-spacing:-0.541px;color:#0a0a0a">SIN RUTA</span>
<span class="t" style="left:794.00px;top:379.06px;font:normal bold 10.8px/14px 'Liberation Sans',sans-serif;letter-spacing:0.000px;color:#0a0a0a">0</span>
<span class="t" style="left:773.00px;top:403.06px;font:normal bold 10.8px/14px 'Liberation Sans',sans-serif;letter-spacing:-0.053px;color:#0a0a0a">$0.00</span>
<span class="t" style="left:665.00px;top:259.88px;font:normal bold 11.3px/15px 'Liberation Sans',sans-serif;letter-spacing:0.162px;color:#9cac9c">Método pago</span>
<span class="t" style="left:1471.10px;top:825.87px;font:normal bold 10.2px/13px 'Liberation Sans',sans-serif;letter-spacing:-0.375px;color:#fff">Management</span>
<span class="t" style="left:1531.40px;top:825.87px;font:normal normal 10.2px/13px 'Liberation Sans',sans-serif;letter-spacing:0.000px;color:#e8ecf0;transform:scaleX(0.7907);transform-origin:0 0">Pro</span>
<span class="t" style="left:414.60px;top:720.84px;font:normal normal 12px/15px 'Liberation Sans',sans-serif;letter-spacing:-0.240px;color:#fff">Elementos envia...</span>
<span class="t" style="left:1472.00px;top:863.61px;font:normal normal 11.8px/15px 'Liberation Sans',sans-serif;letter-spacing:-0.255px;color:#fff">05:43:09 p.m.</span>
<span class="t" style="left:1477.00px;top:880.81px;font:normal normal 11.8px/15px 'Liberation Sans',sans-serif;letter-spacing:-0.231px;color:#fff">23/10/2025</span>
</body></html>
